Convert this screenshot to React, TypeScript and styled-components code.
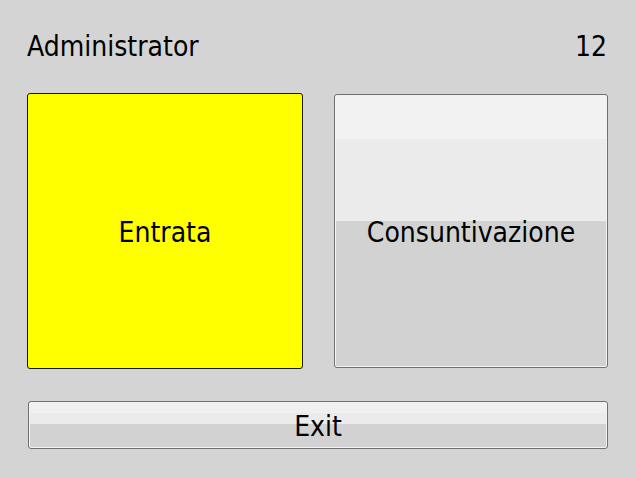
import React from "react";
import styled, { createGlobalStyle } from "styled-components";

const GlobalStyle = createGlobalStyle`
  html, body {
    margin: 0;
    padding: 0;
    background: #d4d4d4;
  }
  body {
    font-family: "DejaVu Sans Condensed", "DejaVu Sans", sans-serif;
  }
`;

const Screen = styled.div`
  width: 636px;
  height: 478px;
  box-sizing: border-box;
  padding: 31px 28px 0 27px;
  display: flex;
  flex-direction: column;
  background: #d4d4d4;
`;

const Header = styled.div`
  display: flex;
  justify-content: space-between;
  align-items: center;
  height: 30px;
  padding-right: 1px;
  font-size: 28px;
  color: #000;
`;

const Tiles = styled.div`
  display: grid;
  grid-template-columns: 276px 274px;
  justify-content: space-between;
  margin-top: 32px;
  height: 276px;
`;

const Tile = styled.button<{ $accent?: boolean }>`
  font-family: inherit;
  font-size: 28px;
  color: #000;
  padding: 3px 0 0;
  margin: 0;
  cursor: pointer;
  box-sizing: border-box;
  display: flex;
  align-items: center;
  justify-content: center;
  border-radius: 3px;
  ${(p) =>
    p.$accent
      ? `
    background: #ffff00;
    border: 1px solid #1a1a00;
  `
      : `
    margin-top: 1px;
    height: 274px;
    border: 1px solid #707070;
    box-shadow: inset 1px 0 0 #f4f4f4, inset -1px 0 0 #f4f4f4, inset 0 -1px 0 #f4f4f4;
    background: linear-gradient(
      to bottom,
      #f2f2f2 0,
      #f2f2f2 44px,
      #ebebeb 44px,
      #ebebeb 126px,
      #d2d2d2 126px,
      #d2d2d2 100%
    );
  `}
`;

const ExitButton = styled.button`
  font-family: inherit;
  font-size: 28px;
  color: #000;
  margin: 32px 0 0 1px;
  padding: 2px 0 0;
  height: 48px;
  box-sizing: border-box;
  border: 1px solid #707070;
  border-radius: 3px;
  cursor: pointer;
  box-shadow: inset 1px 0 0 #f4f4f4, inset -1px 0 0 #f4f4f4, inset 0 -1px 0 #f4f4f4;
  background: linear-gradient(
    to bottom,
    #f0f0f0 0,
    #f0f0f0 11px,
    #ebebeb 11px,
    #ebebeb 22px,
    #d2d2d2 22px,
    #d2d2d2 100%
  );
`;

export default function App() {
  return (
    <>
      <GlobalStyle />
      <Screen>
        <Header>
          <span>Administrator</span>
          <span>12</span>
        </Header>
        <Tiles>
          <Tile $accent>Entrata</Tile>
          <Tile>Consuntivazione</Tile>
        </Tiles>
        <ExitButton>Exit</ExitButton>
      </Screen>
    </>
  );
}
